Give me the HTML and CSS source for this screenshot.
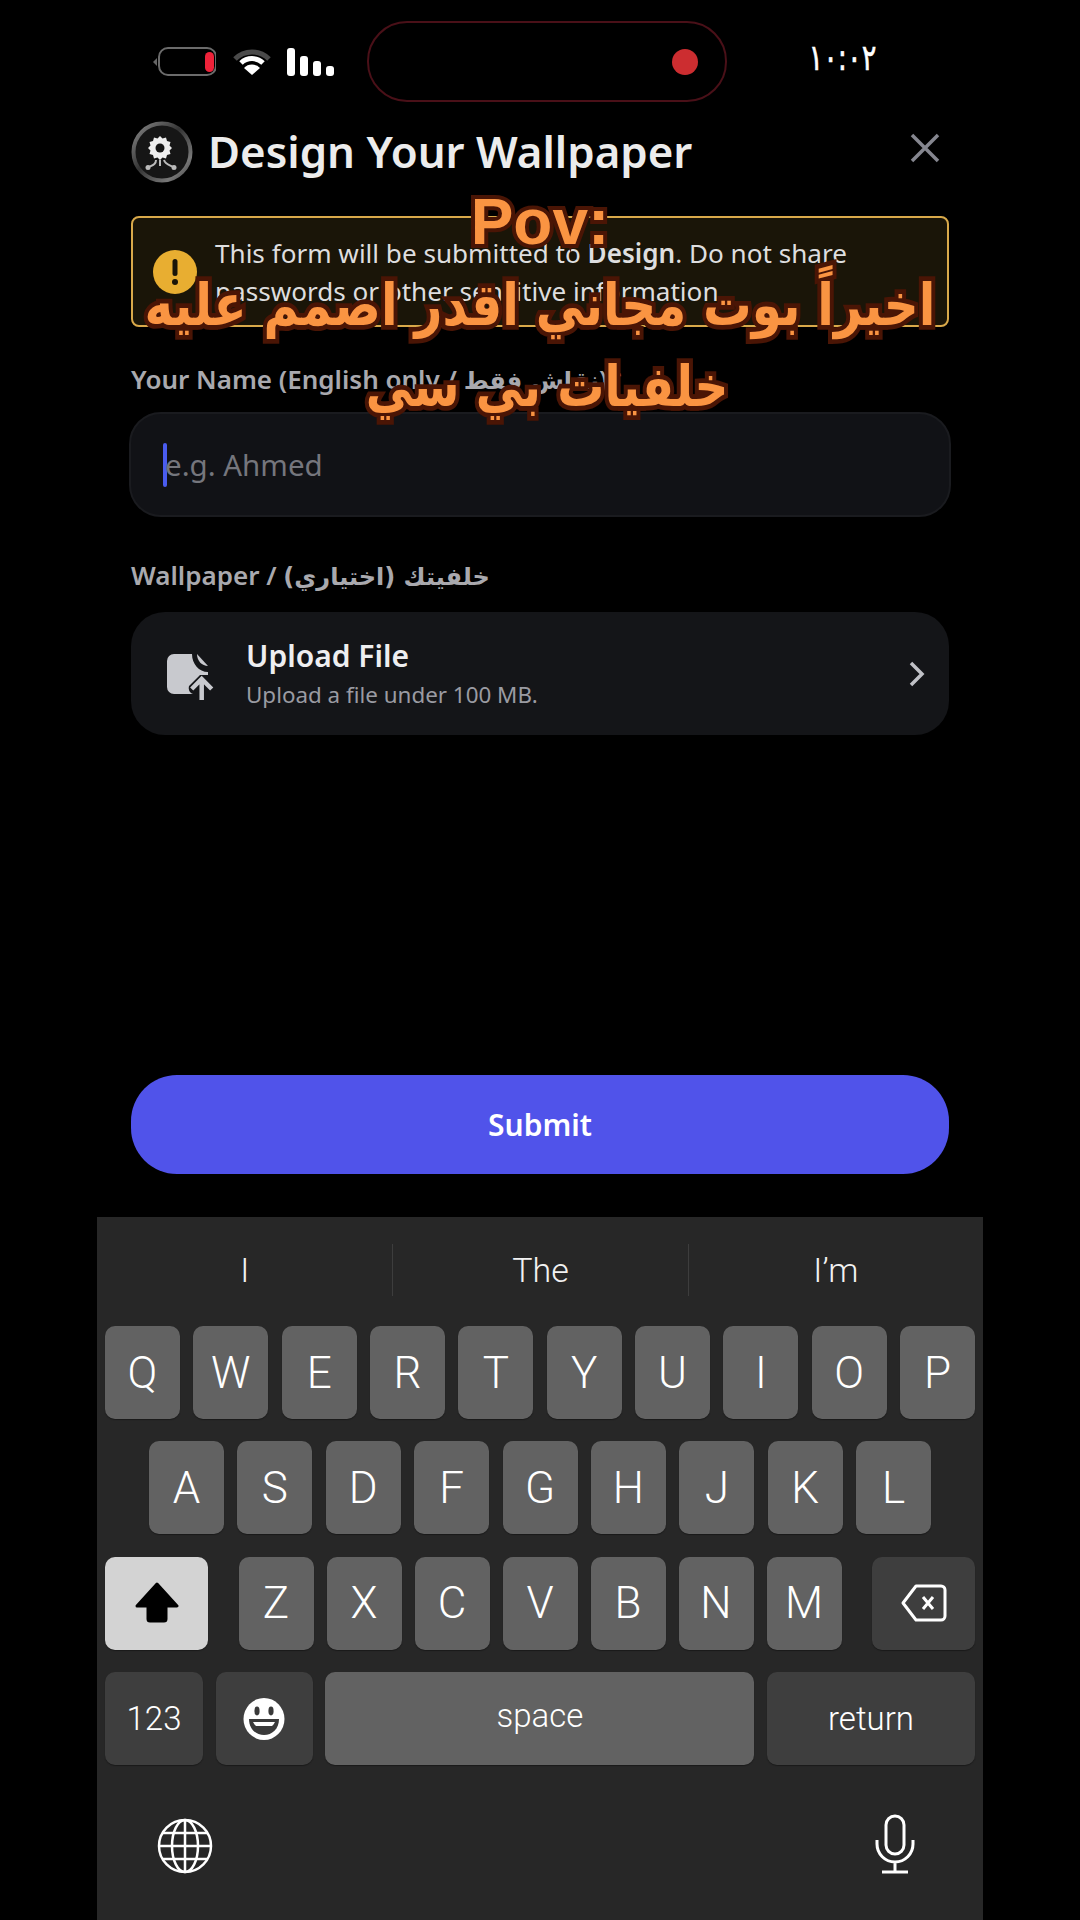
FILE: index.html
```html
<!DOCTYPE html>
<html lang="en">
<head>
  <meta charset="UTF-8">
  <meta name="viewport" content="width=device-width, initial-scale=1.0">
  <title>Design Your Wallpaper</title>
  <link rel="stylesheet" href="styles.css">
</head>
<body>
  <div class="screen">
    <div class="status">
      <div class="status-icons">
        <svg class="battery" width="64" height="30" viewBox="0 0 64 30">
          <path d="M1 15 L5 11 V19 Z" fill="#666"/>
          <rect x="7" y="1" width="57" height="27" rx="9" fill="none" stroke="#6b6b6b" stroke-width="2"/>
          <rect x="53" y="6" width="9" height="20" rx="4.5" fill="#ee2239" transform="translate(0 -1)"/>
        </svg>
        <svg class="wifi" width="38" height="28" viewBox="0 0 38 28">
          <path d="M2 11 A24 24 0 0 1 36 11" fill="none" stroke="#4a4a4a" stroke-width="5"/>
          <path d="M8 15 A16 16 0 0 1 30 15" fill="none" stroke="#fff" stroke-width="5"/>
          <path d="M19 27 L11 20 A11 11 0 0 1 27 20 Z" fill="#fff"/>
        </svg>
        <div class="bars">
          <span class="bar bar-4"></span>
          <span class="bar bar-3"></span>
          <span class="bar bar-2"></span>
          <span class="bar bar-1"></span>
        </div>
      </div>
      <div class="island"><span class="rec"></span></div>
      <div class="clock">۱۰:۰۲</div>
    </div>

    <div class="form">
      <div class="header">
        <svg class="avatar" width="62" height="62" viewBox="0 0 62 62">
          <defs>
            <linearGradient id="ring" x1="0" y1="0" x2="1" y2="1">
              <stop offset="0" stop-color="#8a8a8a"/>
              <stop offset="0.45" stop-color="#333"/>
              <stop offset="0.8" stop-color="#777"/>
              <stop offset="1" stop-color="#444"/>
            </linearGradient>
          </defs>
          <circle cx="31" cy="31" r="28.5" fill="#161616" stroke="url(#ring)" stroke-width="4"/>
          <path d="M29 15 l2.5 2.5 3.5-1 1 3.5 3.5 1-1 3.5 2.5 2.5-2.5 2.5 1 3.5-3.5 1-1 3.5-3.5-1-2.5 2.5-2.5-2.5-3.5 1-1-3.5-3.5-1 1-3.5-2.5-2.5 2.5-2.5-1-3.5 3.5-1 1-3.5 3.5 1 Z" fill="#eee"/>
          <circle cx="29" cy="27" r="4.5" fill="#161616"/>
          <path d="M29 39 V45 M25 39 C25 43 22 44 18 46 M33 39 C34 43 38 44 42 46" fill="none" stroke="#bbb" stroke-width="2"/>
          <circle cx="17" cy="46.5" r="2.5" fill="#bbb"/>
          <circle cx="43" cy="46.5" r="2.5" fill="#bbb"/>
        </svg>
        <h1 class="title">Design Your Wallpaper</h1>
        <svg class="close" width="30" height="30" viewBox="0 0 30 30">
          <path d="M2 2 L28 28 M28 2 L2 28" stroke="#85868f" stroke-width="3.5" fill="none"/>
        </svg>
      </div>

      <div class="notice">
        <svg class="warn" width="44" height="44" viewBox="0 0 44 44">
          <circle cx="22" cy="22" r="22" fill="#e8ae31"/>
          <rect x="19.5" y="9" width="5" height="17" rx="2.5" fill="#1a1508"/>
          <circle cx="22" cy="32" r="3" fill="#1a1508"/>
        </svg>
        <p class="notice-text">This form will be submitted to <strong>Design</strong>. Do not share passwords or other sensitive information.</p>
      </div>

      <div class="label label-name">Your Name (English only / <span class="ar">نقاش فقط</span>)<span class="req">*</span></div>
      <div class="input">
        <span class="caret"></span>
        <span class="placeholder">e.g. Ahmed</span>
      </div>

      <div class="label label-file">Wallpaper / <span class="ar">خلفيتك (اختياري)</span></div>
      <div class="upload">
        <svg class="file-icon" width="48" height="50" viewBox="0 0 48 50">
          <path d="M8 2 H26 C26 12 33 20 42 20 V23 H34 L23 34 C22 38 24 41 27 42 H8 A7 7 0 0 1 1 35 V9 A7 7 0 0 1 8 2 Z" fill="#c8c9ce"/>
          <path d="M31 2 L42 14 C36 14 31 9 31 2 Z" fill="#c8c9ce"/>
          <path d="M35.7 48 V28 M25.7 37 L35.7 27 L45.7 37" fill="none" stroke="#c8c9ce" stroke-width="4.5"/>
        </svg>
        <div class="upload-text">
          <div class="upload-title">Upload File</div>
          <div class="upload-sub">Upload a file under 100 MB.</div>
        </div>
        <svg class="chevron" width="16" height="26" viewBox="0 0 16 26">
          <path d="M2 2 L13 13 L2 24" fill="none" stroke="#c0c1c6" stroke-width="3.5"/>
        </svg>
      </div>

      <button class="submit">Submit</button>
    </div>

    <div class="keyboard">
      <div class="suggestions">
        <span class="sug">I</span>
        <span class="sug">The</span>
        <span class="sug">I’m</span>
      </div>
      <div class="keys">
        <div class="row">
          <div class="key">Q</div><div class="key">W</div><div class="key">E</div><div class="key">R</div><div class="key">T</div><div class="key">Y</div><div class="key">U</div><div class="key">I</div><div class="key">O</div><div class="key">P</div>
        </div>
        <div class="row row-a">
          <div class="key">A</div><div class="key">S</div><div class="key">D</div><div class="key">F</div><div class="key">G</div><div class="key">H</div><div class="key">J</div><div class="key">K</div><div class="key">L</div>
        </div>
        <div class="row">
          <div class="key key-shift">
            <svg width="46" height="42" viewBox="0 0 46 42"><path d="M23 2 L43 24 H32 V37 A2 2 0 0 1 30 39 H16 A2 2 0 0 1 14 37 V24 H3 Z" fill="#000" stroke="#000" stroke-width="3" stroke-linejoin="round"/></svg>
          </div>
          <div class="letters">
            <div class="key">Z</div><div class="key">X</div><div class="key">C</div><div class="key">V</div><div class="key">B</div><div class="key">N</div><div class="key">M</div>
          </div>
          <div class="key key-dark key-back">
            <svg width="46" height="38" viewBox="0 0 46 38"><path d="M15 2 H40 A4 4 0 0 1 44 6 V32 A4 4 0 0 1 40 36 H15 L2 19 Z" fill="none" stroke="#fff" stroke-width="3" stroke-linejoin="round"/><path d="M22 13 L32 25 M32 13 L22 25" stroke="#fff" stroke-width="3"/></svg>
          </div>
        </div>
        <div class="row">
          <div class="key key-dark key-num">123</div>
          <div class="key key-dark key-emoji">
            <svg width="42" height="42" viewBox="0 0 42 42">
              <ellipse cx="21" cy="21" rx="20.5" ry="21" fill="#fff"/>
              <ellipse cx="14" cy="13" rx="2.6" ry="4.4" fill="#3a3a3a"/>
              <ellipse cx="28" cy="13" rx="2.6" ry="4.4" fill="#3a3a3a"/>
              <path d="M6 21 H36 C36 31 29 37 21 37 C13 37 6 31 6 21 Z" fill="#3a3a3a"/>
              <path d="M10 24 H32 C31 26 30 27 29 28 H13 C12 27 11 26 10 24 Z" fill="#fff"/>
            </svg>
          </div>
          <div class="key key-space">space</div>
          <div class="key key-dark key-return">return</div>
        </div>
      </div>
      <div class="kb-bottom">
        <svg width="56" height="56" viewBox="0 0 56 56" fill="none" stroke="#fff" stroke-width="2.5">
          <circle cx="28" cy="28" r="26"/>
          <ellipse cx="28" cy="28" rx="13" ry="26"/>
          <path d="M28 2 V54 M2 28 H54 M6 15 H50 M6 41 H50"/>
        </svg>
        <svg class="mic" width="40" height="60" viewBox="0 0 40 60" fill="none" stroke="#fff" stroke-width="3">
          <rect x="11" y="2" width="18" height="38" rx="9"/>
          <path d="M2 26 V30 A18 18 0 0 0 38 30 V26 M20 48 V58 M7 58 H33"/>
        </svg>
      </div>
    </div>

    <div class="caption pov">Pov:</div>
    <div class="caption line-one" dir="rtl">اخيراً بوت مجاني اقدر اصمم عليه</div>
    <div class="caption line-two" dir="rtl">خلفيات بي سي</div>
  </div>
</body>
</html>
```

FILE: styles.css
```css
* {
  box-sizing: border-box;
}
body {
  margin: 0;
  background: #000;
  font-family: "Noto Sans", "DejaVu Sans", sans-serif;
  color: #fff;
}
.screen {
  position: relative;
  width: 1080px;
  height: 1920px;
  overflow: hidden;
  background: #000;
  display: flex;
  flex-direction: column;
}

/* status bar */
.status {
  height: 121px;
  padding: 21px 203px 0 152px;
  display: flex;
  align-items: flex-start;
}
.status-icons {
  width: 215px;
  height: 81px;
  display: flex;
  align-items: center;
  gap: 17px;
}
.wifi {
  margin-right: -1px;
}
.bars {
  height: 28px;
  display: flex;
  align-items: flex-end;
  gap: 5px;
}
.bar {
  width: 8px;
  background: #fff;
  border-radius: 3px;
}
.bar-4 { height: 28px; }
.bar-3 { height: 20px; }
.bar-2 { height: 15px; }
.bar-1 { height: 10px; }
.island {
  width: 360px;
  height: 81px;
  border: 2px solid #4a1018;
  border-radius: 40px;
  display: flex;
  align-items: center;
  justify-content: flex-end;
  padding-right: 27px;
}
.rec {
  width: 26px;
  height: 26px;
  border-radius: 50%;
  background: #cc2d30;
}
.clock {
  margin-left: auto;
  margin-right: 1px;
  font-family: "DejaVu Sans", sans-serif;
  font-size: 36px;
  -webkit-text-stroke: 0.6px #fff;
  line-height: 81px;
  height: 81px;
  margin-top: -4px;
  transform: scaleX(0.76);
  transform-origin: right center;
}

/* form */
.form {
  height: 1096px;
  padding: 0 131px;
  display: flex;
  flex-direction: column;
}
.header {
  height: 62px;
  display: flex;
  align-items: center;
}
.title {
  margin: -3px 0 0 15px;
  font-size: 43.8px;
  font-weight: 600;
  color: #ececec;
  white-space: nowrap;
}
.close {
  margin-left: auto;
  margin-right: 9px;
  margin-top: -9px;
}
.notice {
  margin-top: 33px;
  height: 111px;
  border: 2px solid #d9a94a;
  border-radius: 8px;
  background: #1a1508;
  display: flex;
  align-items: center;
  padding-left: 20px;
}
.notice-text {
  margin: 0 0 0 18px;
  width: 664px;
  font-size: 26.1px;
  line-height: 38px;
  color: #dededf;
}
.notice-text strong {
  font-weight: 600;
}
.label {
  font-size: 26px;
  font-weight: 600;
  color: #a9a9ae;
  line-height: 36px;
}
.ar {
  font-family: "DejaVu Sans", sans-serif;
  font-size: 24px;
}
.req {
  color: #e88aa8;
}
.label-name {
  margin-top: 34px;
}
.input {
  margin-top: 13px;
  margin-left: -2px;
  margin-right: -2px;
  height: 105px;
  background: #111216;
  border: 2px solid #1a1b1f;
  border-radius: 32px;
  display: flex;
  align-items: center;
  padding-left: 32px;
}
.caret {
  width: 4px;
  height: 44px;
  background: #4a5cf0;
  border-radius: 2px;
}
.placeholder {
  margin-left: -2px;
  font-size: 29.5px;
  color: #75767d;
}
.label-file {
  margin-top: 40px;
}
.upload {
  margin-top: 17px;
  height: 123px;
  background: #141518;
  border-radius: 34px;
  display: flex;
  align-items: center;
  padding: 0 24px 0 35px;
}
.file-icon {
  margin-top: 6px;
}
.upload-text {
  margin-left: 32px;
}
.upload-title {
  font-size: 30px;
  font-weight: 600;
  line-height: 40px;
  color: #eeeef0;
}
.upload-sub {
  font-size: 22.4px;
  line-height: 34px;
  margin-top: 2px;
  color: #9a9ba2;
}
.chevron {
  margin-left: auto;
}
.submit {
  margin-top: auto;
  margin-bottom: 43px;
  height: 99px;
  border: none;
  border-radius: 46px;
  background: #5053ea;
  color: #fff;
  font-family: inherit;
  font-size: 30px;
  font-weight: 600;
}

/* keyboard */
.keyboard {
  flex: 1;
  margin: 0 97px;
  background: #272727;
  font-family: Roboto, "Liberation Sans", sans-serif;
}
.suggestions {
  height: 109px;
  padding-bottom: 3px;
  display: grid;
  grid-template-columns: repeat(3, 1fr);
  align-items: center;
}
.sug {
  height: 52px;
  font-size: 34px;
  font-weight: 300;
  line-height: 52px;
  text-align: center;
  color: #f2f2f2;
  border-left: 1px solid #3d3d3d;
}
.sug:first-child {
  border-left: none;
}
.keys {
  padding: 0 8px;
  display: flex;
  flex-direction: column;
  gap: 22.4px;
}
.row {
  height: 93px;
  display: flex;
  justify-content: space-between;
}
.row-a {
  padding: 0 44px;
}
.letters {
  display: flex;
  gap: 13px;
}
.key {
  width: 75px;
  height: 93px;
  background: #626262;
  border-radius: 10px;
  box-shadow: 0 1px 1px #1a1a1a;
  display: flex;
  align-items: center;
  justify-content: center;
  font-size: 44px;
  font-weight: 300;
  color: #fff;
}
.key-dark {
  background: #3e3e3e;
}
.key-shift {
  width: 103px;
  background: #d3d3d3;
}
.key-back {
  width: 103px;
}
.key-num {
  width: 98px;
  font-size: 33px;
}
.key-emoji {
  width: 97px;
}
.key-space {
  width: 429px;
  font-size: 33px;
  padding-bottom: 6px;
}
.key-return {
  width: 208px;
  font-size: 33px;
}
.kb-bottom {
  margin-top: 52px;
  padding: 0 68px 0 60px;
  display: flex;
  justify-content: space-between;
  align-items: center;
}
.mic {
  margin-top: -3px;
}

/* captions over the recording */
.caption {
  position: absolute;
  left: 0;
  width: 1080px;
  text-align: center;
  font-family: "DejaVu Sans", sans-serif;
  font-weight: 700;
  color: #fa9442;
  -webkit-text-stroke: 8px #4a1505;
  paint-order: stroke fill;
  white-space: nowrap;
}
.pov {
  top: 182px;
  font-family: "Liberation Sans", sans-serif;
  font-size: 64px;
  line-height: 80px;
}
.line-one {
  top: 265px;
  font-size: 48.5px;
  line-height: 80px;
  transform: scaleY(1.2);
}
.line-two {
  top: 347px;
  padding-left: 14px;
  font-size: 47px;
  line-height: 80px;
  transform: scaleY(1.2);
}
```
